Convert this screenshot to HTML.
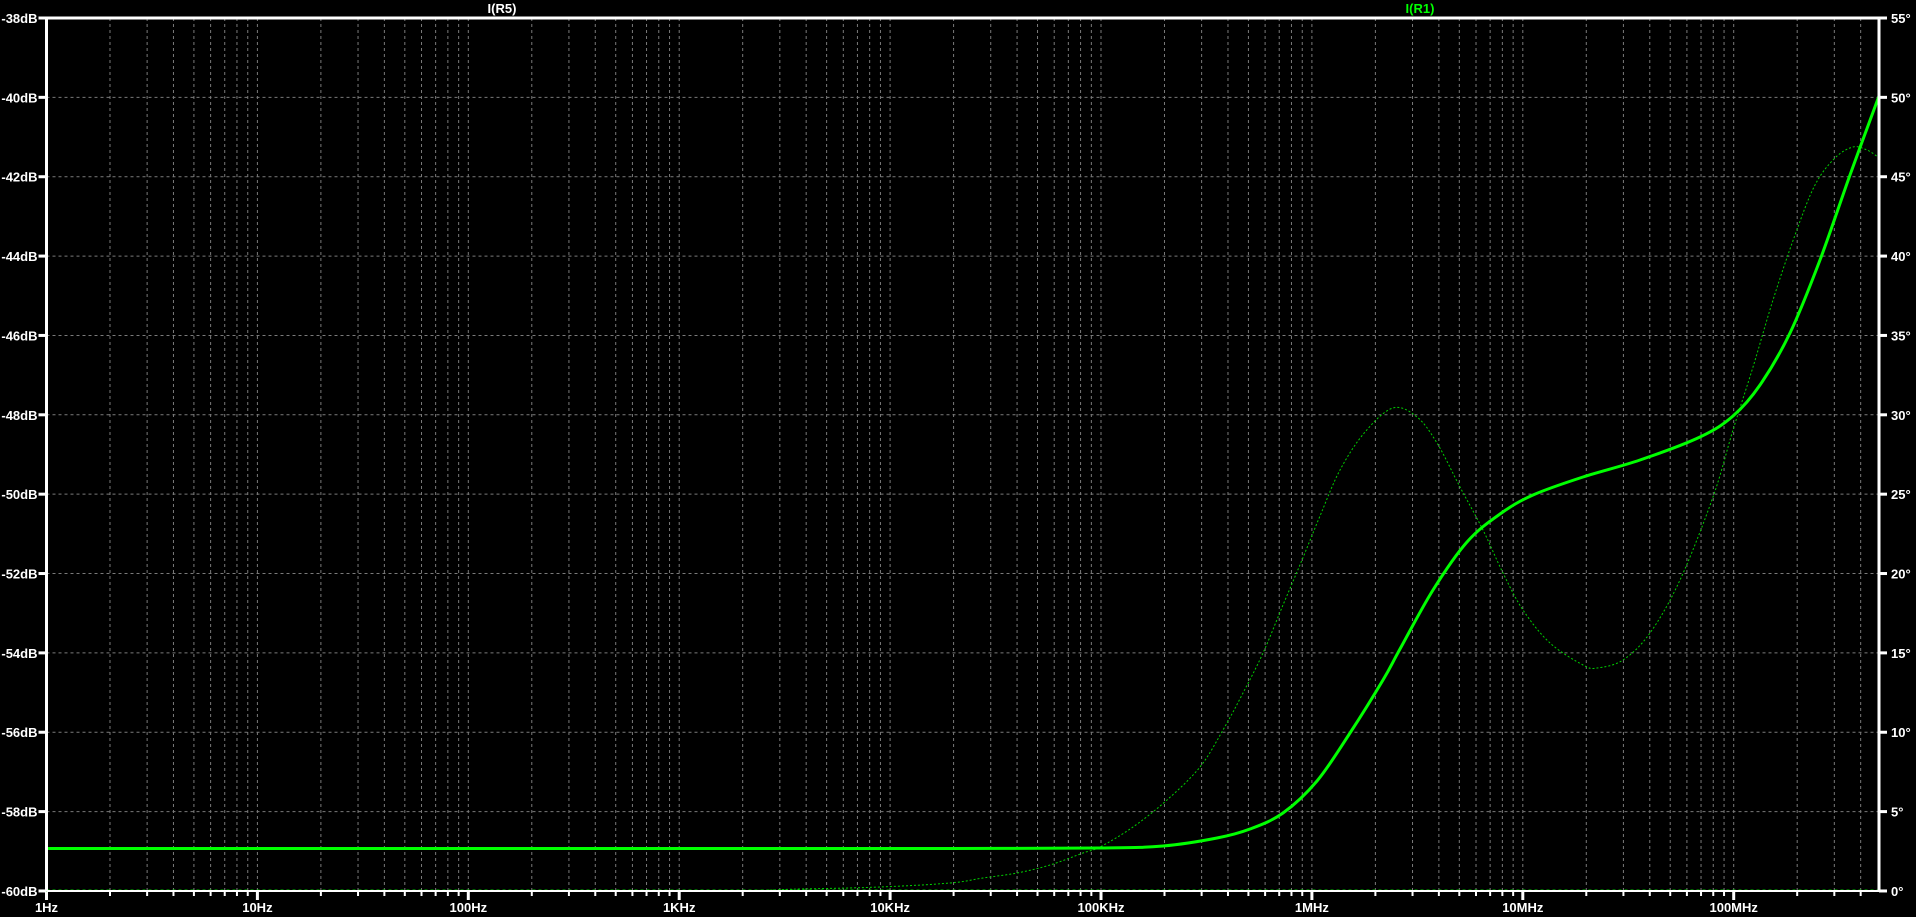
<!DOCTYPE html>
<html><head><meta charset="utf-8"><style>
html,body{margin:0;padding:0;background:#000;width:1916px;height:917px;overflow:hidden}
svg{display:block}
text{font-family:"Liberation Sans",sans-serif;font-size:13px;font-weight:bold;fill:#fff}
</style></head><body>
<svg id="s" width="1916" height="917" xmlns="http://www.w3.org/2000/svg"></svg>
<script>
const s=document.getElementById('s');
const L=46.5,R=1879,T=18,B=891,D=210.9,H=79.36;
let h='';
const X=f=>L+Math.log10(f)*D;
for(let d=0;d<9;d++){for(let m=1;m<10;m++){const f=Math.pow(10,d)*m;const x=X(f);if(x>R-1)continue;
 if(!(d==0&&m==1)) h+=`<line x1="${x}" y1="${T}" x2="${x}" y2="${B}" stroke="#7a7a7a" stroke-width="1" stroke-dasharray="3,3"/>`;
 h+=`<line x1="${x}" y1="${B}" x2="${x}" y2="${B+(m==1?9:5)}" stroke="#fff" stroke-width="${m==1?3:2}"/>`;}}
const fl=['1Hz','10Hz','100Hz','1KHz','10KHz','100KHz','1MHz','10MHz','100MHz'];
fl.forEach((t,i)=>{h+=`<text x="${L+i*D}" y="912" text-anchor="middle">${t}</text>`});
for(let i=0;i<=11;i++){const y=T+i*H;
 if(i>0&&i<11) h+=`<line x1="${L}" y1="${y}" x2="${R}" y2="${y}" stroke="#7a7a7a" stroke-width="1" stroke-dasharray="3,3"/>`;
 h+=`<line x1="${L-8}" y1="${y}" x2="${L}" y2="${y}" stroke="#fff" stroke-width="3"/>`;
 h+=`<line x1="${R}" y1="${y}" x2="${R+8}" y2="${y}" stroke="#fff" stroke-width="3"/>`;
 h+=`<text x="${L-9}" y="${y+5}" text-anchor="end">${-38-2*i}dB</text>`;
 h+=`<text x="${R+12}" y="${y+5}">${55-5*i}°</text>`;}
h+=`<line x1="${L}" y1="${B-1}" x2="${R}" y2="${B-1}" stroke="#00c000" stroke-width="1" stroke-dasharray="3,3"/>`;
const thick=[[46,848.5],[800,848.5],[950,848.5],[1100,848],[1163,846],[1217,838],[1250,829],[1283,813],[1317,781],[1350,733],[1383,680],[1400,649],[1433,590],[1467,542],[1500,514],[1533,495],[1583,477],[1640,460],[1700,437],[1733,416],[1760,385],[1790,333],[1820,260],[1850,175],[1879,96]];
const thin=[[46,891],[672,891],[800,889],[880,887],[950,883],[983,878],[1017,873],[1050,865],[1083,853],[1100,847],[1133,827],[1167,800],[1200,767],[1223,730],[1243,693],[1263,653],[1283,605],[1302,560],[1320,516],[1340,470],[1365,432],[1393,408],[1417,417],[1437,443],[1460,487],[1483,530],[1503,573],[1523,610],[1550,643],[1583,665],[1597,668],[1623,660],[1650,633],[1680,580],[1713,497],[1733,430],[1753,367],[1773,300],[1795,235],[1815,185],[1835,158],[1853,147],[1867,150],[1878,157]];
function path(p){let d=`M${p[0][0]},${p[0][1]}`;for(let i=1;i<p.length;i++){const p0=p[Math.max(i-2,0)],p1=p[i-1],p2=p[i],p3=p[Math.min(i+1,p.length-1)];
 const c1=[p1[0]+(p2[0]-p0[0])/6,p1[1]+(p2[1]-p0[1])/6],c2=[p2[0]-(p3[0]-p1[0])/6,p2[1]-(p3[1]-p1[1])/6];
 d+=` C${c1[0]},${c1[1]} ${c2[0]},${c2[1]} ${p2[0]},${p2[1]}`;}return d;}
h+=`<path d="${path(thin)}" fill="none" stroke="#00d000" stroke-width="1" stroke-dasharray="2,2"/>`;
h+=`<path d="${path(thick)}" fill="none" stroke="#00ff00" stroke-width="3"/>`;
h+=`<line x1="${L}" y1="${T}" x2="${R}" y2="${T}" stroke="#fff" stroke-width="3"/>`;
h+=`<line x1="${L}" y1="${T}" x2="${L}" y2="${B}" stroke="#fff" stroke-width="3"/>`;
h+=`<line x1="${R}" y1="${T}" x2="${R}" y2="${B}" stroke="#fff" stroke-width="3"/>`;
h+=`<line x1="${L}" y1="${B}" x2="${R}" y2="${B}" stroke="#fff" stroke-width="2"/>`;
h+=`<text x="502" y="13" text-anchor="middle">I(R5)</text>`;
h+=`<text x="1420" y="13" text-anchor="middle" style="fill:#00ff00">I(R1)</text>`;
s.innerHTML=h;
</script>
</body></html>
